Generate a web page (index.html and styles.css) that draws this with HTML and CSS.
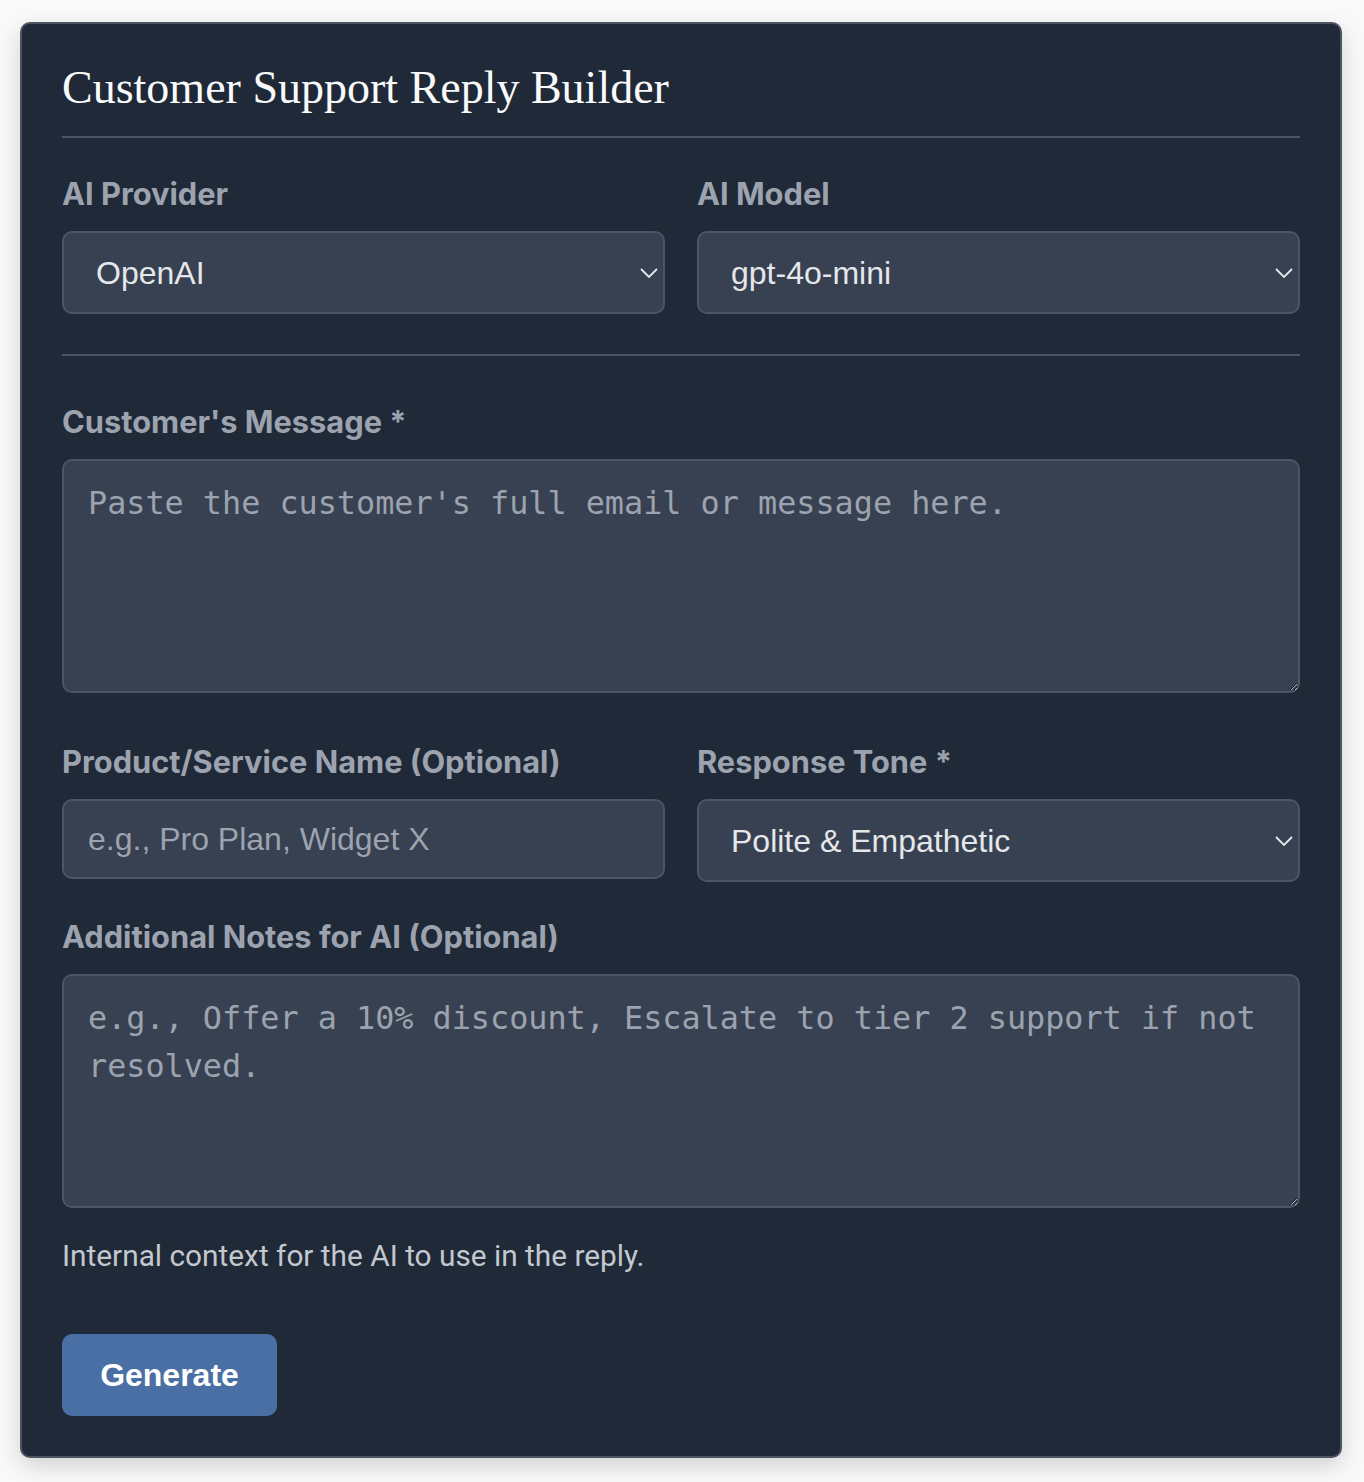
FILE: index.html
```html
<!DOCTYPE html>
<html lang="en">
<head>
<meta charset="utf-8">
<title>Customer Support Reply Builder</title>
<link rel="stylesheet" href="styles.css">
</head>
<body>
<div class="card">
  <h1 class="title">Customer Support Reply Builder</h1>

  <div class="section providers">
    <div class="row">
      <div class="field">
        <label class="label" for="provider">AI Provider</label>
        <div class="select-wrap">
          <select id="provider" class="control select"><option>OpenAI</option></select>
          <svg class="chev" width="18" height="10" viewBox="0 0 18 10"><path d="M1 1 L9 9 L17 1" fill="none" stroke="#e5e7eb" stroke-width="1.8"/></svg>
        </div>
      </div>
      <div class="field">
        <label class="label" for="model">AI Model</label>
        <div class="select-wrap">
          <select id="model" class="control select"><option>gpt-4o-mini</option></select>
          <svg class="chev" width="18" height="10" viewBox="0 0 18 10"><path d="M1 1 L9 9 L17 1" fill="none" stroke="#e5e7eb" stroke-width="1.8"/></svg>
        </div>
      </div>
    </div>
  </div>

  <div class="field message">
    <label class="label" for="msg">Customer's Message *</label>
    <textarea id="msg" class="control area" placeholder="Paste the customer's full email or message here."></textarea>
  </div>

  <div class="row product-row">
    <div class="field">
      <label class="label" for="product">Product/Service Name (Optional)</label>
      <input id="product" class="control input" type="text" placeholder="e.g., Pro Plan, Widget X">
    </div>
    <div class="field">
      <label class="label" for="tone">Response Tone *</label>
      <div class="select-wrap">
        <select id="tone" class="control select"><option>Polite &amp; Empathetic</option></select>
        <svg class="chev" width="18" height="10" viewBox="0 0 18 10"><path d="M1 1 L9 9 L17 1" fill="none" stroke="#e5e7eb" stroke-width="1.8"/></svg>
      </div>
    </div>
  </div>

  <div class="field notes">
    <label class="label" for="notes">Additional Notes for AI (Optional)</label>
    <textarea id="notes" class="control area" placeholder="e.g., Offer a 10% discount, Escalate to tier 2 support if not resolved."></textarea>
    <p class="help">Internal context for the AI to use in the reply.</p>
  </div>

  <button class="btn" type="button">Generate</button>
</div>
</body>
</html>
```

FILE: styles.css
```css
* { box-sizing: border-box; }

html, body { margin: 0; }

body {
  background: #f9f9f9;
  padding: 22px 22px 25px 20px;
  font-family: Roboto, "Liberation Sans", sans-serif;
}

.card {
  width: 1322px;
  background: #1f2937;
  border: 2px solid #4b5563;
  border-radius: 10px;
  padding: 40px 40px 40px 40px;
  box-shadow: 0 8px 22px rgba(0, 0, 0, 0.16);
  display: flex;
  flex-direction: column;
}

.title {
  margin: 0;
  font-family: "Liberation Serif", serif;
  font-weight: 400;
  font-size: 46px;
  line-height: 48px;
  color: #f9fafb;
  padding-bottom: 24px;
  border-bottom: 2px solid #4b5563;
}

.section.providers {
  margin-top: 36px;
  padding-bottom: 40px;
  border-bottom: 2px solid #4b5563;
}

.row {
  display: grid;
  grid-template-columns: 1fr 1fr;
  gap: 32px;
}

.field {
  display: flex;
  flex-direction: column;
}

.label {
  font-family: Inter, Roboto, "Liberation Sans", sans-serif;
  font-weight: 700;
  font-size: 30.8px;
  line-height: 40px;
  color: #9ca3af;
  margin-bottom: 17px;
}

.control {
  display: block;
  width: 100%;
  margin: 0;
  background: #374151;
  border: 2px solid #4b5563;
  border-radius: 10px;
  outline: none;
}

.select-wrap {
  position: relative;
}

.select {
  appearance: none;
  -webkit-appearance: none;
  height: 83px;
  padding: 0 60px 0 32px;
  font-family: "Liberation Sans", Arial, sans-serif;
  font-size: 32px;
  color: #e5e7eb;
}

.chev {
  position: absolute;
  right: 7px;
  top: 50%;
  margin-top: -5px;
  pointer-events: none;
}

.message {
  margin-top: 46px;
}

.area {
  height: 234px;
  padding: 18px 24px;
  font-family: "DejaVu Sans Mono", "Liberation Mono", monospace;
  font-size: 31.8px;
  line-height: 48px;
  color: #e5e7eb;
  resize: vertical;
}

.area::placeholder {
  color: #9ca3af;
  opacity: 1;
}

.product-row {
  margin-top: 49px;
  align-items: start;
}

.input {
  height: 80px;
  padding: 0 24px;
  font-family: "Liberation Sans", Arial, sans-serif;
  font-size: 32px;
  color: #e5e7eb;
}

.input::placeholder {
  color: #9ca3af;
  opacity: 1;
}

.notes {
  margin-top: 35px;
}

.help {
  margin: 28px 0 0 0;
  font-family: Roboto, "Liberation Sans", sans-serif;
  font-size: 29.8px;
  line-height: 40px;
  color: #c3c7ce;
}

.btn {
  align-self: flex-start;
  margin-top: 58px;
  width: 215px;
  height: 82px;
  border: none;
  border-radius: 10px;
  background: #4a6fa5;
  color: #ffffff;
  font-family: "Liberation Sans", Arial, sans-serif;
  font-weight: 700;
  font-size: 32px;
  padding: 0;
}
```
